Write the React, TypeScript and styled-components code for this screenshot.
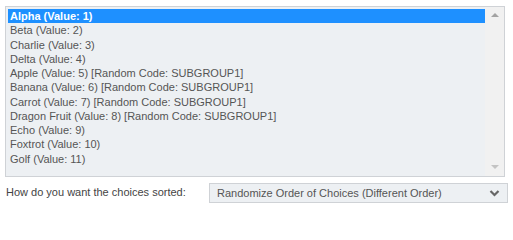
import React from "react";
import styled, { createGlobalStyle } from "styled-components";

const Global = createGlobalStyle`
  html, body { margin: 0; padding: 0; background: #ffffff; }
  body { font-family: "Liberation Sans", Arial, sans-serif; }
`;

const Page = styled.div`
  padding: 6px 5px 0 5px;
  width: 513px;
  box-sizing: border-box;
`;

const ListBox = styled.div`
  width: 500px;
  height: 171px;
  box-sizing: border-box;
  border: 1px solid #cfd2d6;
  background: #edf0f3;
  display: flex;
`;

const Items = styled.ul`
  list-style: none;
  margin: 0;
  padding: 2px 0 0 2px;
  flex: 1;
  font-size: 11px;
  line-height: 14.25px;
  color: #555555;
`;

const Item = styled.li<{ $selected?: boolean }>`
  padding-left: 2px;
  white-space: nowrap;
  background: ${(p) => (p.$selected ? "#1e90ff" : "transparent")};
  color: ${(p) => (p.$selected ? "#ffffff" : "#555555")};
  font-weight: ${(p) => (p.$selected ? "bold" : "normal")};
`;

const ScrollBar = styled.div`
  width: 19px;
  background: #f1f1f1;
  display: flex;
  flex-direction: column;
  justify-content: space-between;
  align-items: center;
  padding: 6px 0 7px;
  box-sizing: border-box;
`;

const Arrow = styled.div<{ $down?: boolean }>`
  width: 0;
  height: 0;
  border-left: 4px solid transparent;
  border-right: 4px solid transparent;
  ${(p) =>
    p.$down
      ? "border-top: 4px solid #c3c3c3;"
      : "border-bottom: 4px solid #a3a3a3;"}
`;

const Row = styled.div`
  display: flex;
  align-items: center;
  margin-top: 6px;
`;

const Label = styled.label`
  font-size: 11px;
  color: #444444;
  margin-left: 1px;
  width: 203px;
  margin-top: -2px;
`;

const Select = styled.div`
  width: 299px;
  height: 20px;
  box-sizing: border-box;
  border: 1px solid #cfd2d6;
  background: #edf0f3;
  display: flex;
  align-items: center;
  justify-content: space-between;
  padding: 0 7px 0 7px;
  font-size: 11px;
  color: #555555;
`;

const items = [
  "Alpha (Value: 1)",
  "Beta (Value: 2)",
  "Charlie (Value: 3)",
  "Delta (Value: 4)",
  "Apple (Value: 5) [Random Code: SUBGROUP1]",
  "Banana (Value: 6) [Random Code: SUBGROUP1]",
  "Carrot (Value: 7) [Random Code: SUBGROUP1]",
  "Dragon Fruit (Value: 8) [Random Code: SUBGROUP1]",
  "Echo (Value: 9)",
  "Foxtrot (Value: 10)",
  "Golf (Value: 11)",
];

export default function App() {
  return (
    <>
      <Global />
      <Page>
        <ListBox>
          <Items>
            {items.map((t, i) => (
              <Item key={t} $selected={i === 0}>
                {t}
              </Item>
            ))}
          </Items>
          <ScrollBar>
            <Arrow />
            <Arrow $down />
          </ScrollBar>
        </ListBox>
        <Row>
          <Label>How do you want the choices sorted:</Label>
          <Select>
            <span>Randomize Order of Choices (Different Order)</span>
            <svg width="11" height="8" viewBox="0 0 11 8">
              <path d="M1.5 2 L5.5 6 L9.5 2" fill="none" stroke="#666" strokeWidth="2.2" />
            </svg>
          </Select>
        </Row>
      </Page>
    </>
  );
}
